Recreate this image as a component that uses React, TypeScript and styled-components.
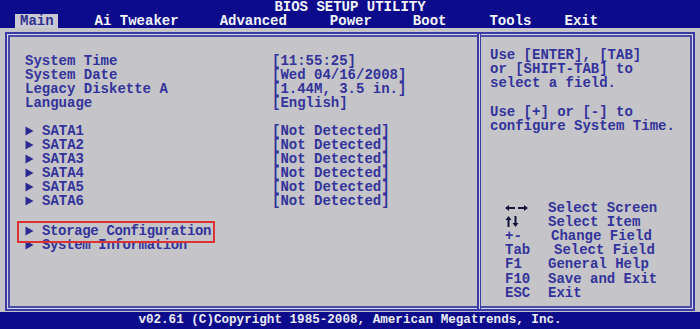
import React from "react";
import styled, { createGlobalStyle } from "styled-components";

const GlobalStyle = createGlobalStyle`
  html, body { margin: 0; padding: 0; background: #c5c5c9; }
  body { font-family: "Liberation Mono", "DejaVu Sans Mono", monospace; }
`;

const NAVY = "#0b0b8c";
const TEXT = "#33339b";
const LINE = "#3a3aa4";

const Screen = styled.div`
  width: 700px;
  height: 329px;
  display: flex;
  flex-direction: column;
  font-family: "Liberation Mono", "DejaVu Sans Mono", monospace;
  font-weight: bold;
  font-size: 14px;
  overflow: hidden;
`;

const Header = styled.header`
  background: ${NAVY};
  height: 28px;
  display: flex;
  flex-direction: column;
  color: #f4f4fa;
`;

const Title = styled.div`
  height: 14px;
  line-height: 14px;
  text-align: center;
`;

const MenuBar = styled.nav`
  display: flex;
  height: 14px;
  align-items: flex-end;
`;

const MenuItem = styled.div<{ $ml: number; $active?: boolean }>`
  margin-left: ${(p) => p.$ml}px;
  padding: 0 4px 0 5px;
  height: 14px;
  line-height: 14px;
  background: ${(p) => (p.$active ? "#c9c9d4" : "transparent")};
  color: ${(p) => (p.$active ? "#2f2f8e" : "#f4f4fa")};
`;

const Main = styled.main`
  flex: 1;
  background: #c5c5c9;
  padding: 4px 5px 1px 5px;
  display: flex;
`;

const Panel = styled.div`
  flex: 1;
  border: 2px solid ${LINE};
  box-shadow: inset 0 0 0 1px #d6d6e6, inset 0 0 0 3px #4a4aa8;
  padding: 3px;
  display: grid;
  grid-template-columns: 1fr 4px 209px;
  color: ${TEXT};
`;

const Divider = styled.div`
  margin: -3px 0;
  border-left: 2px solid ${LINE};
  border-right: 1px solid ${LINE};
  background: #d6d6e6;
`;

const LeftCol = styled.section`
  padding: 17px 0 0 15px;
  display: flex;
  flex-direction: column;
`;

const Row = styled.div<{ $mt?: number }>`
  display: grid;
  grid-template-columns: 247px 1fr;
  height: 14px;
  line-height: 14px;
  margin-top: ${(p) => p.$mt ?? 0}px;
  white-space: pre;
`;

const SubItem = styled.div<{ $mt?: number; $boxed?: boolean; $tight?: boolean }>`
  display: flex;
  align-items: center;
  height: 14px;
  line-height: 14px;
  white-space: pre;
  letter-spacing: ${(p) => (p.$tight ? "-0.35px" : "0")};
  margin-top: ${(p) => p.$mt ?? 0}px;
  position: relative;
  width: fit-content;
  &::after {
    content: "";
    display: ${(p) => (p.$boxed ? "block" : "none")};
    position: absolute;
    top: -3px;
    bottom: -5px;
    left: -8px;
    right: -4px;
    border: 2px solid #dc3434;
    z-index: 2;
    pointer-events: none;
  }
`;

const Arrow = styled.svg`
  width: 17px;
  height: 10px;
  flex: none;
`;

const RightCol = styled.section`
  padding: 11px 0 6px 9px;
  display: flex;
  flex-direction: column;
  justify-content: space-between;
`;

const HelpText = styled.div`
  line-height: 14.2px;
  white-space: pre;
`;

const Keys = styled.div`
  padding-left: 15px;
  display: flex;
  flex-direction: column;
`;

const KeyRow = styled.div`
  display: flex;
  height: 14.2px;
  line-height: 14.2px;
  align-items: center;
  white-space: pre;
`;

const Key = styled.div`
  width: 43px;
  flex: none;
  display: flex;
  align-items: center;
`;

const KeyLabel = styled.div<{ $shift: number }>`
  padding-left: ${(p) => p.$shift}px;
`;

const Footer = styled.footer`
  height: 17px;
  background: ${NAVY};
  color: #ececf4;
  font-size: 12.6px;
  line-height: 17px;
  text-align: center;
  white-space: pre;
`;

const Tri = () => (
  <Arrow viewBox="0 0 17 10">
    <path d="M0.5 0.5 L8.5 5 L0.5 9.5 Z" fill="#2a2a92" />
  </Arrow>
);

const LeftRight = () => (
  <svg width="23" height="8" viewBox="0 0 23 8">
    <path d="M0 4 L4 1 L4 3 L10 3 L10 5 L4 5 L4 7 Z" fill="#15153a" />
    <path d="M23 4 L19 1 L19 3 L13 3 L13 5 L19 5 L19 7 Z" fill="#15153a" />
  </svg>
);

const UpDown = () => (
  <svg width="14" height="11" viewBox="0 0 14 11">
    <path d="M3.5 0 L6.5 4 L4.5 4 L4.5 11 L2.5 11 L2.5 4 L0.5 4 Z" fill="#15153a" />
    <path d="M10.5 11 L13.5 7 L11.5 7 L11.5 0 L9.5 0 L9.5 7 L7.5 7 Z" fill="#15153a" />
  </svg>
);

const menu: { name: string; ml: number; active?: boolean }[] = [
  { name: "Main", ml: 15, active: true },
  { name: "Ai Tweaker", ml: 32 },
  { name: "Advanced", ml: 32 },
  { name: "Power", ml: 34 },
  { name: "Boot", ml: 32 },
  { name: "Tools", ml: 34 },
  { name: "Exit", ml: 24 },
];

const settings = [
  ["System Time", "[11:55:25]"],
  ["System Date", "[Wed 04/16/2008]"],
  ["Legacy Diskette A", "[1.44M, 3.5 in.]"],
  ["Language", "[English]"],
];

const satas = ["SATA1", "SATA2", "SATA3", "SATA4", "SATA5", "SATA6"];

const keys: { key: React.ReactNode; label: string; shift: number }[] = [
  { key: <LeftRight />, label: "Select Screen", shift: 0 },
  { key: <UpDown />, label: "Select Item", shift: 0 },
  { key: "+-", label: "Change Field", shift: 3 },
  { key: "Tab", label: "Select Field", shift: 6 },
  { key: "F1", label: "General Help", shift: 0 },
  { key: "F10", label: "Save and Exit", shift: 0 },
  { key: "ESC", label: "Exit", shift: 0 },
];

export default function App() {
  return (
    <>
      <GlobalStyle />
      <Screen>
        <Header>
          <Title>BIOS SETUP UTILITY</Title>
          <MenuBar>
            {menu.map((m) => (
              <MenuItem key={m.name} $ml={m.ml} $active={m.active}>
                {m.name}
              </MenuItem>
            ))}
          </MenuBar>
        </Header>
        <Main>
          <Panel>
            <LeftCol>
              {settings.map(([k, v]) => (
                <Row key={k}>
                  <span>{k}</span>
                  <span>{v}</span>
                </Row>
              ))}
              {satas.map((s, i) => (
                <Row key={s} $mt={i === 0 ? 14 : 0}>
                  <SubItem>
                    <Tri />
                    {s}
                  </SubItem>
                  <span>[Not Detected]</span>
                </Row>
              ))}
              <SubItem $mt={16} $boxed $tight>
                <Tri />
                Storage Configuration
              </SubItem>
              <SubItem $tight>
                <Tri />
                System Information
              </SubItem>
            </LeftCol>
            <Divider />
            <RightCol>
              <HelpText>
                {"Use [ENTER], [TAB]\nor [SHIFT-TAB] to\nselect a field.\n\nUse [+] or [-] to\nconfigure System Time."}
              </HelpText>
              <Keys>
                {keys.map((k) => (
                  <KeyRow key={k.label}>
                    <Key>{k.key}</Key>
                    <KeyLabel $shift={k.shift}>{k.label}</KeyLabel>
                  </KeyRow>
                ))}
              </Keys>
            </RightCol>
          </Panel>
        </Main>
        <Footer>v02.61 (C)Copyright 1985-2008, American Megatrends, Inc.</Footer>
      </Screen>
    </>
  );
}
